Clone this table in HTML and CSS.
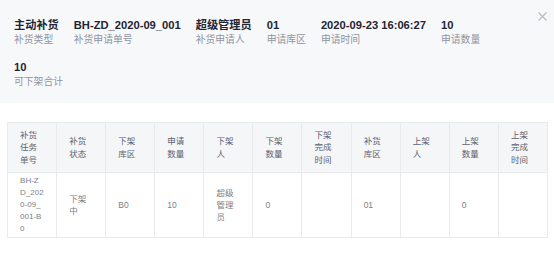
FILE: index.html
```html
<!DOCTYPE html>
<html lang="zh-CN">
<head>
<meta charset="utf-8">
<link rel="stylesheet" href="styles.css">
</head>
<body>
<div class="summary">
  <div class="fields">
    <div class="field"><div class="value">主动补货</div><div class="label">补货类型</div></div>
    <div class="field"><div class="value">BH-ZD_2020-09_001</div><div class="label">补货申请单号</div></div>
    <div class="field"><div class="value">超级管理员</div><div class="label">补货申请人</div></div>
    <div class="field"><div class="value">01</div><div class="label">申请库区</div></div>
    <div class="field"><div class="value">2020-09-23 16:06:27</div><div class="label">申请时间</div></div>
    <div class="field"><div class="value">10</div><div class="label">申请数量</div></div>
    <div class="field"><div class="value">10</div><div class="label">可下架合计</div></div>
  </div>
  <button class="close" aria-label="关闭">
    <svg width="9" height="9" viewBox="0 0 9 9"><path d="M0.5 0.5 L8.5 8.5 M8.5 0.5 L0.5 8.5" stroke="#b8bcc2" stroke-width="1.1" fill="none"/></svg>
  </button>
</div>
<div class="content">
  <table class="grid">
    <thead>
      <tr>
        <th>补货任务单号</th>
        <th>补货状态</th>
        <th>下架库区</th>
        <th>申请数量</th>
        <th>下架人</th>
        <th>下架数量</th>
        <th>下架完成时间</th>
        <th>补货库区</th>
        <th>上架人</th>
        <th>上架数量</th>
        <th>上架完成时间</th>
      </tr>
    </thead>
    <tbody>
      <tr>
        <td class="code">BH-ZD_2020-09_001-B0</td>
        <td>下架中</td>
        <td>B0</td>
        <td>10</td>
        <td>超级管理员</td>
        <td>0</td>
        <td></td>
        <td>01</td>
        <td></td>
        <td>0</td>
        <td></td>
      </tr>
    </tbody>
  </table>
</div>
</body>
</html>
```

FILE: styles.css
```css
* { box-sizing: border-box; }
html, body { margin: 0; padding: 0; background: #ffffff; }
body {
  font-family: "Liberation Sans", "Noto Sans CJK SC", sans-serif;
  width: 554px;
}
.summary {
  position: relative;
  background: #f7f8fa;
  padding: 17px 40px 14px 14px;
  height: 103px;
}
.fields {
  display: flex;
  flex-wrap: wrap;
  column-gap: 15px;
  row-gap: 13px;
}
.field { display: flex; flex-direction: column; }
.value {
  font-size: 11.2px;
  line-height: 16px;
  font-weight: bold;
  color: #1f2533;
  white-space: nowrap;
}
.label {
  font-size: 9.8px;
  line-height: 13px;
  color: #8f959e;
  white-space: nowrap;
}
.close {
  position: absolute;
  top: 12px;
  right: 7px;
  width: 9px;
  height: 9px;
  padding: 0;
  border: 0;
  background: none;
  display: flex;
}
.content {
  padding: 19px 6px 0 7px;
}
.grid {
  width: 541px;
  table-layout: fixed;
  border-collapse: collapse;
  font-family: "Liberation Sans", "Noto Sans CJK SC", sans-serif;
  font-size: 8.5px;
}
.grid th, .grid td {
  border: 1px solid #e9eaec;
  text-align: left;
  vertical-align: middle;
  word-break: break-all;
  font-weight: normal;
}
.grid th {
  background: #f5f6f7;
  color: #5c6270;
  line-height: 12.4px;
  padding: 6px 12.1px;
}
.grid td {
  color: #7a7f88;
  line-height: 12px;
  padding: 2px 12.1px;
}
.grid td.code {
  font-size: 8px;
}
```
